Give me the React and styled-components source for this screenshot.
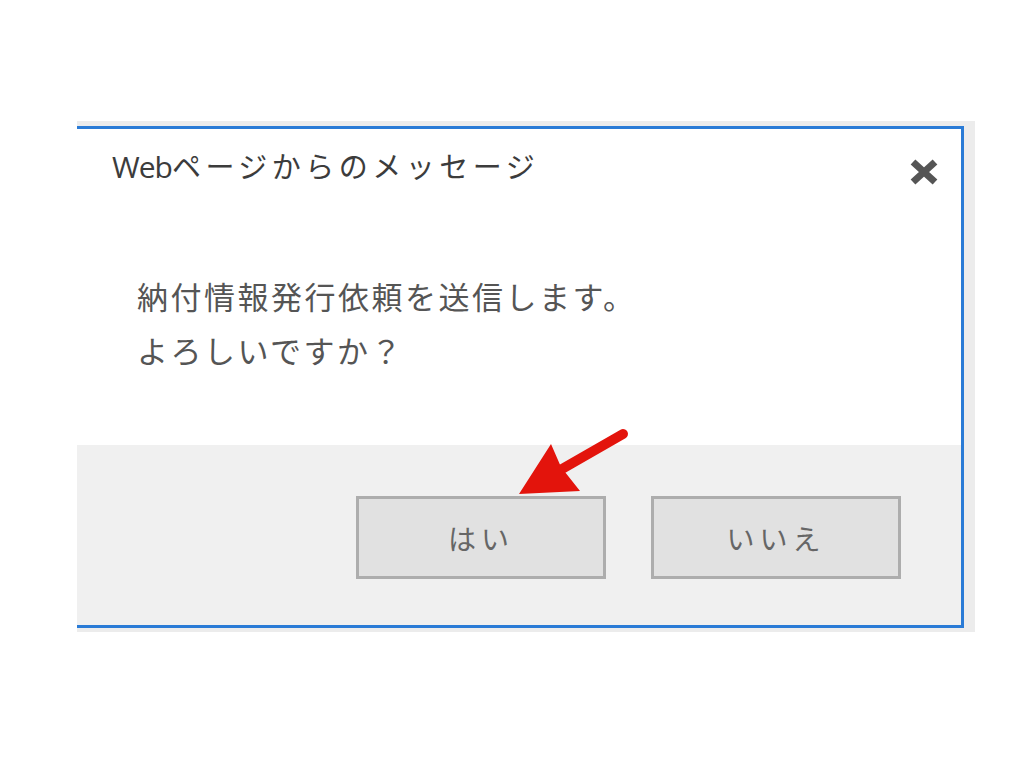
import React from "react";
import styled, { createGlobalStyle } from "styled-components";

const GlobalStyle = createGlobalStyle`
  html, body {
    margin: 0;
    padding: 0;
    background: #ffffff;
  }
  body {
    font-family: "Noto Sans CJK JP", "Open Sans", sans-serif;
  }
`;

const Page = styled.div`
  position: relative;
  width: 1024px;
  height: 768px;
  background: #ffffff;
  padding-top: 121px;
  box-sizing: border-box;
`;

const Backdrop = styled.div`
  margin-left: 77px;
  width: 898px;
  background: #ececec;
  padding: 5px 11px 4px 0;
  box-sizing: border-box;
`;

const Dialog = styled.div`
  display: flex;
  flex-direction: column;
  height: 502px;
  box-sizing: border-box;
  background: #ffffff;
  border: 3px solid #2a7bd6;
  border-left: none;
`;

const Header = styled.div`
  display: flex;
  justify-content: space-between;
  align-items: flex-start;
  height: 72px;
  padding: 0 21px 0 35px;
`;

const Title = styled.div`
  font-family: "Noto Sans CJK JP", sans-serif;
  font-size: 29px;
  line-height: 72px;
  letter-spacing: 4.5px;
  color: #3c3c3c;
`;

const Latin = styled.span`
  font-family: "Open Sans", sans-serif;
  font-size: 30px;
  letter-spacing: -1px;
`;

const CloseButton = styled.button`
  margin-top: 29px;
  padding: 0;
  border: none;
  background: transparent;
  width: 32px;
  height: 28px;
  cursor: pointer;
`;

const Body = styled.div`
  flex: 1;
  padding: 68px 0 0 60px;
`;

const Line = styled.div`
  font-size: 31px;
  line-height: 54px;
  letter-spacing: 2.5px;
  color: #555555;
`;

const Footer = styled.div`
  display: flex;
  justify-content: flex-end;
  align-items: flex-start;
  gap: 45px;
  height: 180px;
  padding: 51px 60px 0 0;
  box-sizing: border-box;
  background: #f0f0f0;
`;

const Button = styled.button`
  width: 250px;
  height: 83px;
  box-sizing: border-box;
  border: 3px solid #adadad;
  background: #e1e1e1;
  font-family: "Noto Sans CJK JP", sans-serif;
  font-size: 28px;
  letter-spacing: 5px;
  color: #666666;
  cursor: pointer;
`;

const Pointer = styled.svg`
  position: absolute;
  left: 510px;
  top: 425px;
  width: 125px;
  height: 75px;
`;

const CloseIcon = () => (
  <svg width="32" height="28" viewBox="0 0 32 28">
    <path d="M5 4 L27 24 M27 4 L5 24" stroke="#555" strokeWidth="7" />
  </svg>
);

export default function App() {
  return (
    <>
      <GlobalStyle />
      <Page>
        <Backdrop>
          <Dialog>
            <Header>
              <Title>
                <Latin>Web</Latin>ページからのメッセージ
              </Title>
              <CloseButton aria-label="閉じる">
                <CloseIcon />
              </CloseButton>
            </Header>
            <Body>
              <Line>納付情報発行依頼を送信します。</Line>
              <Line>よろしいですか？</Line>
            </Body>
            <Footer>
              <Button>はい</Button>
              <Button>いいえ</Button>
            </Footer>
          </Dialog>
        </Backdrop>
        <Pointer viewBox="0 0 125 75">
          <path d="M52 44 L113 9" stroke="#e3140c" strokeWidth="10" strokeLinecap="round" />
          <polygon points="9,69 41,19 51,42 70,66" fill="#e3140c" />
        </Pointer>
      </Page>
    </>
  );
}
